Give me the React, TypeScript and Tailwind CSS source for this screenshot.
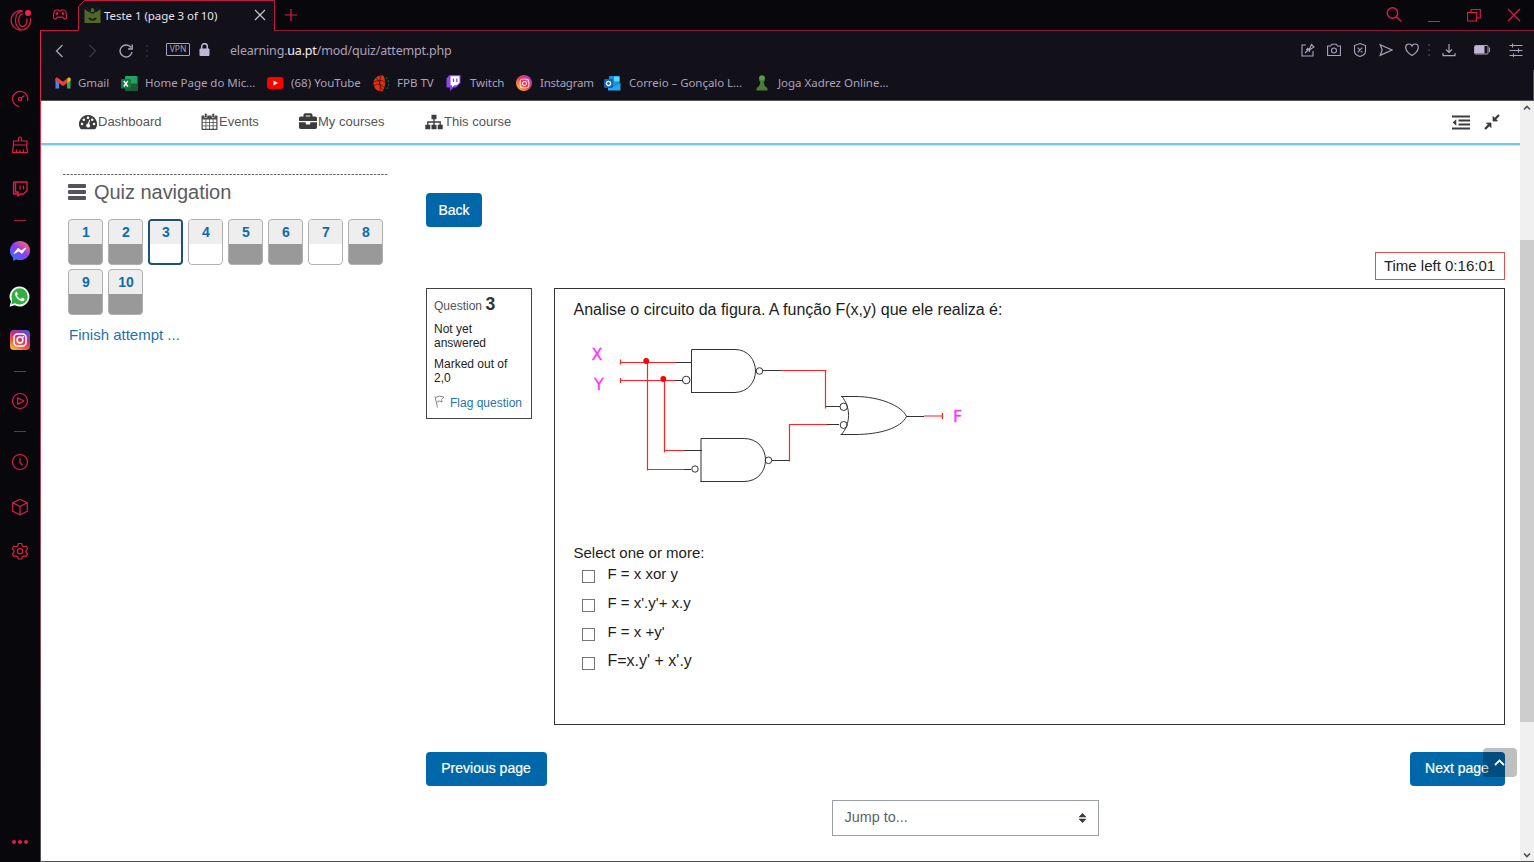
import type { ReactNode } from "react";
import { FaInstagram, FaBriefcase } from "react-icons/fa";

const ui = "font-['Noto_Sans',sans-serif]";

function Stroke({ size = 18, vb = 24, w = 1.4, children, className = "" }: { size?: number; vb?: number; w?: number; children: ReactNode; className?: string }) {
  return (
    <svg width={size} height={size} viewBox={`0 0 ${vb} ${vb}`} fill="none" stroke="currentColor" strokeWidth={w} className={`block shrink-0 ${className}`}>
      {children}
    </svg>
  );
}

function Slot({ mt, children }: { mt: string; children: ReactNode }) {
  return <div className={`flex h-5 w-10 shrink-0 items-center justify-center pr-px ${mt}`}>{children}</div>;
}

function Dash({ mt }: { mt: string }) {
  return <div className={`h-px w-3 shrink-0 bg-[#a8183a] ${mt}`} />;
}

function InstagramGlyph() {
  return (
    <>
      <rect x="4" y="4" width="12" height="12" rx="3.4" fill="none" stroke="#fff" strokeWidth="1.5" />
      <circle cx="10" cy="10" r="2.9" fill="none" stroke="#fff" strokeWidth="1.5" />
      <circle cx="13.4" cy="6.6" r="0.9" fill="#fff" />
    </>
  );
}

function Sidebar() {
  return (
    <aside className="flex h-full w-10 shrink-0 flex-col items-center bg-[#08070b] text-[#dd1e48]">
      <Slot mt="mt-[10px]">
        <svg width="22" height="22" viewBox="0 0 22 22" fill="none" stroke="currentColor" strokeWidth="1.2" className="ml-[3px] shrink-0">
          <path d="M12.500 1.800A9.700 9.700 0 1 0 20.300 9.200" />
          <path d="M12.500 1.800C8.500 2.500 5.500 6 5.500 11.300c0 4.700 2.500 8 5.500 9.200M12.800 4.800C10.500 5.200 8.800 8 8.800 11.500c0 3.500 1.700 6 4 6 2.700 0 4.400-3 4.200-8" />
          <circle cx="18" cy="3.900" r="3" fill="#fa1e4e" stroke="none" />
        </svg>
      </Slot>
      <Slot mt="mt-[59px]">
        <Stroke vb={18} w={1.2}>
          <path d="M8.300 16.500A7.600 7.600 0 1 1 16.500 10.800M10.200 8.200l3-2.400" />
          <circle cx="9" cy="9.300" r="1.700" />
        </Stroke>
      </Slot>
      <Slot mt="mt-[26px]">
        <Stroke vb={18} w={1.2}>
          <path d="M7.500 5V2.500a1.500 1.500 0 0 1 3 0V5H16v4H2.500V5zM2.500 9L1.500 16.500h15L15.500 9M5.500 13.500v3M9 14v2.500M12.500 13.500v3" />
        </Stroke>
      </Slot>
      <Slot mt="mt-[24px]">
        <Stroke size={16} vb={16} w={1.3}>
          <path d="M2 1h13v8.500l-3.500 3.500H8.500L6 15v-2H1.500V3z" />
          <path d="M3.500 2v9h2.500v2" strokeWidth="1.500" />
          <path d="M8 4.500v4M11.500 4.500v4" />
        </Stroke>
      </Slot>
      <Dash mt="mt-[21px]" />
      <Slot mt="mt-[20px]">
        <svg width="20" height="20" viewBox="0 0 20 20">
          <defs>
            <linearGradient id="msg" x1="0" y1="1" x2="0.8" y2="0">
              <stop offset="0" stopColor="#1488ff" />
              <stop offset="0.55" stopColor="#8a3cf5" />
              <stop offset="1" stopColor="#ff6a68" />
            </linearGradient>
          </defs>
          <path d="M10 0C4.300 0 0 4.200 0 9.700c0 2.900 1.200 5.300 3.200 7V20l3-1.500c1.200.4 2.400.6 3.800.6 5.700 0 10-4.200 10-9.500S15.700 0 10 0z" fill="url(#msg)" />
          <path d="M4 12.600L8 7.200l3.200 2.500L16 6.900l-4 5.600-3.200-2.500z" fill="#fff" stroke="#fff" strokeWidth="0.800" />
        </svg>
      </Slot>
      <Slot mt="mt-[25px]">
        <svg width="21" height="21" viewBox="0 0 21 21">
          <path d="M10.500 0.500A10 10 0 0 0 2 15.600L0.500 20.700l5.200-1.400A10 10 0 1 0 10.500 0.500z" fill="#f4f4f4" />
          <circle cx="10.600" cy="10.400" r="8.100" fill="#2fb041" />
          <path d="M3.400 13l-1 5.200 5-1.400z" fill="#2fb041" />
          <path d="M7.300 5.700c-1.500 1-1.600 2.600-.6 4.500 1.200 2.300 3 4 5.400 4.900 1.700.6 3-.1 3.400-1.600.1-.5 0-.7-.4-.9l-1.700-.8c-.3-.1-.6-.1-.8.200l-.8 1c-1.800-.8-3.100-2-3.900-3.600l.7-.9c.2-.2.200-.5.100-.7l-.7-1.700c-.2-.4-.400-.5-.7-.4z" fill="#fff" />
        </svg>
      </Slot>
      <Slot mt="mt-[24px]">
        <svg width="20" height="20" viewBox="0 0 20 20">
          <defs>
            <linearGradient id="ig" x1="0.100" y1="1" x2="0.700" y2="0">
              <stop offset="0" stopColor="#fdc74d" />
              <stop offset="0.350" stopColor="#f25a3c" />
              <stop offset="0.650" stopColor="#cc2a86" />
              <stop offset="1" stopColor="#5b4fcf" />
            </linearGradient>
          </defs>
          <rect width="20" height="20" rx="4" fill="url(#ig)" />
          <InstagramGlyph />
        </svg>
      </Slot>
      <Dash mt="mt-[21px]" />
      <Slot mt="mt-[19px]">
        <Stroke vb={18} w={1.200}>
          <circle cx="9" cy="9" r="7.500" />
          <path d="M6.700 5.800v6.400L13 9z" strokeLinejoin="round" />
        </Stroke>
      </Slot>
      <Dash mt="mt-[20px]" />
      <Slot mt="mt-[20px]">
        <Stroke vb={18} w={1.200}>
          <circle cx="9" cy="9" r="7.500" />
          <path d="M9 5v4.500l2.500 3" />
        </Stroke>
      </Slot>
      <Slot mt="mt-[25px]">
        <Stroke vb={18} w={1.200}>
          <path d="M9 1.300l7.300 3.500v8.400L9 16.700l-7.300-3.500V4.800zM1.700 4.800L9 8.500l7.300-3.700M9 8.500v8.200" strokeLinejoin="round" />
        </Stroke>
      </Slot>
      <Slot mt="mt-[24px]">
        <Stroke vb={18} w={1.200}>
          <path d="M7.300 1.500h3.400l.6 2.300 1.500.9 2.300-.7 1.500 2.800-1.600 1.600v1.800l1.600 1.600-1.500 2.700-2.300-.6-1.500.9-.6 2.200H7.300l-.6-2.200-1.500-.9-2.300.6-1.500-2.700L3 10.200V8.400L1.400 6.800 2.900 4l2.300.700 1.500-.9z" strokeLinejoin="round" />
          <circle cx="9" cy="9.200" r="2.600" />
        </Stroke>
      </Slot>
      <div className="mt-[279px] flex gap-[2px]">
        <i className="size-[4px] rounded-full bg-[#e01c48]" />
        <i className="size-[4px] rounded-full bg-[#e01c48]" />
        <i className="size-[4px] rounded-full bg-[#e01c48]" />
      </div>
    </aside>
  );
}

function TabBar() {
  return (
    <div className="flex h-[31px] shrink-0 bg-[#08070b] text-[#dd1e48]">
      <div className="flex w-[37px] items-center justify-center border-b border-[#c01c40]">
        <Stroke size={16} vb={16} w={1.200}>
          <path d="M4 3h2.500l1 1h1l1-1H12c1.500 0 2.500 3 2.500 6.500 0 2.500-1.200 3-2.300 2.500L10.500 10.200h-5L3.800 12C2.700 12.500 1.500 12 1.500 9.500 1.500 6 2.500 3 4 3z" />
          <circle cx="5" cy="6.700" r="0.800" />
          <circle cx="11" cy="6.700" r="0.800" />
        </Stroke>
      </div>
      <div className="relative flex w-[197px] items-center bg-[#121019]">
        <svg width="197" height="31" viewBox="0 0 197 31" fill="none" className="absolute inset-0">
          <path d="M0 0h7L0 7z" fill="#08070b" />
          <path d="M-1 30.500H0.500V6.500L6.500 0.500H196.500V30.500H198" stroke="#c01c40" />
        </svg>
        <svg width="17" height="17" viewBox="0 0 17 17" className="ml-[6px]">
          <path d="M0.500 2L4.500 5 8.500 0.500 12.500 5 16.500 2V16H0.500z" fill="#4f6728" />
          <path d="M1.500 0h3v4zM15.500 0h-3v4zM5 4.500l2-2.500v3h3V2l2 2.500-2 2H7zM4 11.200q2.500-1.500 4.500 1 2-2.500 4.500-1-2 2.500-4.500 2.500T4 11.200z" fill="#1b2110" />
        </svg>
        <span className={`${ui} ml-[3px] whitespace-nowrap text-[11.500px] tracking-[-0.050px] text-[#e6e3ec]`}>Teste 1 (page 3 of 10)</span>
        <Stroke size={12} vb={12} w={1.200} className="absolute top-[9px] left-[176px] text-[#c9c6d0]">
          <path d="M1 1l10 10M11 1L1 11" />
        </Stroke>
      </div>
      <div className="flex grow items-center border-b border-[#8c1a34]">
        <Stroke size={12} vb={12} w={1.200} className="ml-[10px]">
          <path d="M6 0v12M0 6h12" />
        </Stroke>
        <Stroke size={16} vb={16} w={1.400} className="mr-[26px] ml-auto">
          <circle cx="6.500" cy="6" r="5.200" />
          <path d="M10.300 9.800l5 4.800" />
        </Stroke>
        <div className="mt-3 mr-[27px] h-px w-3 bg-[#dd1e48]" />
        <Stroke size={14} vb={14} w={1.100} className="mr-[26px]">
          <path d="M0.600 4.500h9v8.500h-9zM4 4.500V1.500h9.300V10H9.600" />
        </Stroke>
        <Stroke size={14} vb={14} w={1.200} className="mr-[13px]">
          <path d="M1 1l12 12M13 1L1 13" />
        </Stroke>
      </div>
    </div>
  );
}

function AddressBar() {
  return (
    <div className="flex h-[39px] shrink-0 items-center text-[#aaa3bb]">
      <Stroke size={14} vb={14} w={1.300} className="ml-[12px]">
        <path d="M9.500 1L3.500 7l6 6" />
      </Stroke>
      <Stroke size={14} vb={14} w={1.300} className="ml-[18px] text-[#3d3947]">
        <path d="M4.500 1l6 6-6 6" />
      </Stroke>
      <Stroke size={14} vb={14} w={1.400} className="ml-[20px]">
        <path d="M12 3.500A6 6 0 1 0 13 8M13.200 0.500V5H9" />
      </Stroke>
      <div className="ml-[13px] flex flex-col gap-[3px]">
        <i className="size-[2px] bg-[#29252f]" />
        <i className="size-[2px] bg-[#29252f]" />
        <i className="size-[2px] bg-[#29252f]" />
      </div>
      <div className="mb-[2px] ml-[18px] flex h-[13px] w-6 items-center justify-center rounded-[1px] border border-[#aaa3bb] font-['Noto_Sans',sans-serif] text-[8.500px] leading-none">VPN</div>
      <svg width="11" height="14" viewBox="0 0 11 14" className="mb-[2px] ml-[9px]">
        <rect x="0.500" y="5.500" width="10" height="7.500" rx="1" fill="#c0b6d6" />
        <path d="M2.700 6V3.500a2.800 2.800 0 0 1 5.600 0V6" fill="none" stroke="#c0b6d6" strokeWidth="1.500" />
      </svg>
      <span className={`${ui} mt-[2px] ml-[20px] text-[12.500px] tracking-[-0.190px] whitespace-nowrap`}>
        elearning.<span className="text-[#f2f0f6]">ua.pt</span>/mod/quiz/attempt.php
      </span>
      <div className="mr-[11px] mb-[2px] ml-auto flex items-center">
        <Stroke size={14} vb={14} w={1.100}>
          <path d="M5 2H1v11h11V8M4 10L9 5M6 5l3 3M5 6.500L8.500 6l2-4.500L13 4l-4 2.500L8 9" />
        </Stroke>
        <Stroke size={14} vb={14} w={1.100} className="ml-[12px]">
          <path d="M0.600 3h3l1.200-1.800h4.400L10.400 3h3v9.500H0.600z" />
          <circle cx="7" cy="7.500" r="2.500" />
        </Stroke>
        <Stroke size={14} vb={14} w={1.100} className="ml-[12px]">
          <path d="M7 0.600l5.500 2v5.900c0 2.500-3 4.200-5.500 5-2.500-.8-5.500-2.500-5.500-5V2.600zM4.700 4.700l4.600 4.600M9.300 4.700L4.700 9.300" />
        </Stroke>
        <Stroke size={14} vb={14} w={1.200} className="ml-[12px]">
          <path d="M1.200 1.700L13 7 1.200 12.300 3.200 7z" />
        </Stroke>
        <Stroke size={14} vb={14} w={1.200} className="ml-[12px]">
          <path d="M7 12.600C3 10 0.700 7.500 0.700 4.500 0.700 2.500 2 1 4 1c1.500 0 2.500.8 3 2 .5-1.200 1.500-2 3-2 2 0 3.300 1.500 3.300 3.500 0 3-2.300 5.500-6.300 8.100z" />
        </Stroke>
        <div className="ml-[9px] flex flex-col gap-[3px]">
          <i className="size-[2px] bg-[#37323f]" />
          <i className="size-[2px] bg-[#37323f]" />
          <i className="size-[2px] bg-[#37323f]" />
        </div>
        <Stroke size={14} vb={14} w={1.200} className="ml-[12px]">
          <path d="M7 1v8M4 6.500l3 3 3-3M1 10v2.700h12V10" />
        </Stroke>
        <svg width="17" height="10" viewBox="0 0 17 10" className="ml-[18px]">
          <rect x="0.500" y="0.500" width="13.500" height="8.500" rx="1" fill="none" stroke="#aaa3bb" />
          <rect x="1" y="1" width="9.500" height="7.500" fill="#c0b6d6" />
          <path d="M15.500 2.500v4.500" stroke="#aaa3bb" />
        </svg>
        <Stroke size={14} vb={14} w={1.100} className="ml-[18px]">
          <path d="M0.500 2.500h13M0.500 7.500h13M0.500 12.500h13M3.500 0.500v4M9.500 5.500v4M4.500 10.500v3.500" />
        </Stroke>
      </div>
    </div>
  );
}

const bookmarks: { label: string; width: string; gap: string; track: string; icon: ReactNode }[] = [
  {
    label: "Gmail", width: "w-[66px]", gap: "w-[23px]", track: "tracking-[-0.1px]",
    icon: (
      <svg width="16" height="12" viewBox="0 0 16 12">
        <path d="M0.500 11.500V1.500L4 4v7.500z" fill="#4285f4" />
        <path d="M15.500 11.500V1.500L12 4v7.500z" fill="#34a853" />
        <path d="M12 1.800l1.500-1.200c1-.6 2 .1 2 1.200v2L12 6z" fill="#fbbc04" />
        <path d="M0.500 3.800v-2C0.500.7 1.600 0 2.500.700L8 4.800 12.500 1.300V5.800L8 9z" fill="#ea4335" />
      </svg>
    ),
  },
  {
    label: "Home Page do Mic...", width: "w-[146px]", gap: "w-[24px]", track: "tracking-[-0.03px]",
    icon: (
      <svg width="17" height="15" viewBox="0 0 17 15">
        <rect x="4" width="12.500" height="15" rx="1" fill="#21a366" />
        <path d="M4 4h6v7H4z" fill="#107c41" /><path d="M10 7.500h6.500V15H4v-4h6z" fill="#185c37" />
        <rect y="3" width="9.500" height="9.500" rx="1" fill="#107c41" />
        <path d="M2.800 5l4 5.500M6.800 5l-4 5.500" stroke="#fff" strokeWidth="1.400" />
      </svg>
    ),
  },
  {
    label: "(68) YouTube", width: "w-[106px]", gap: "w-[24px]", track: "tracking-[0.03px]",
    icon: (
      <svg width="17" height="12" viewBox="0 0 17 12">
        <rect width="16.500" height="12" rx="3" fill="#f00" /><path d="M6.500 3.400v5.200L11 6z" fill="#fff" />
      </svg>
    ),
  },
  {
    label: "FPB TV", width: "w-[73px]", gap: "w-[24px]", track: "tracking-[0px]",
    icon: (
      <svg width="17" height="17" viewBox="0 0 17 17">
        <path d="M10.500 0.800C5 -0.500 0.500 3.500 0.500 8.500c0 4.500 4 8.500 9 7.700 3-4.500 3.500-10.500 1-15.400z" fill="#e03016" />
        <path d="M1 7c4-2 8-2 11 0M3 3c4 3 5 8 4 13M8 1C6 6 6 11 10 15M1 11c3-3 7-2 10 1" fill="none" stroke="#4a1108" strokeWidth="0.800" />
        <path d="M13 2.500a8 8 0 0 1 0 12" fill="none" stroke="#0c6a50" strokeDasharray="2 1.500" strokeWidth="1.200" />
      </svg>
    ),
  },
  {
    label: "Twitch", width: "w-[70px]", gap: "w-[24px]", track: "tracking-[-0.1px]",
    icon: (
      <svg width="15" height="16" viewBox="0 0 15 16">
        <path d="M3.500 0L0.500 3.500v9H4V16l3.500-3.500H10L14.500 8V0z" fill="#8b44f7" />
        <path d="M4.500 1.200h9v6.300l-2.700 2.700H8.200L6 12.300v-2.100H4.500z" fill="#fff" />
        <path d="M7.500 3.500v3.500M10.800 3.500v3.500" stroke="#8b44f7" strokeWidth="1.300" />
      </svg>
    ),
  },
  {
    label: "Instagram", width: "w-[88px]", gap: "w-[24px]", track: "tracking-[-0.25px]",
    icon: (
      <span className="flex size-4 items-center justify-center rounded-full bg-linear-to-tr from-[#ffc83d] via-[#f4304a] to-[#9b12e0] text-white">
        <FaInstagram size={11} />
      </span>
    ),
  },
  {
    label: "Correio – Gonçalo L...", width: "w-[150px]", gap: "w-[25px]", track: "tracking-[-0.05px]",
    icon: (
      <svg width="17" height="15" viewBox="0 0 17 15">
        <rect x="5" width="10.500" height="13" rx="1" fill="#1490df" />
        <path d="M10 0.500h5.500v5H10z" fill="#50d9ff" />
        <path d="M4 8l6 3 6.500-4v7.500H4z" fill="#28a8ea" />
        <rect y="3" width="9" height="9" rx="1" fill="#0a64ba" />
        <circle cx="4.500" cy="7.500" r="2.100" fill="none" stroke="#fff" strokeWidth="1.300" />
      </svg>
    ),
  },
  {
    label: "Joga Xadrez Online...", width: "w-[140px]", gap: "w-[24px]", track: "tracking-[-0.02px]",
    icon: (
      <svg width="17" height="16" viewBox="0 0 17 16">
        <circle cx="8" cy="3.200" r="2.900" fill="#5d9948" />
        <path d="M4.800 5.300h6.400L9.700 6.900c.2 2.700 1.100 4.200 2.800 5.300 1 .7 1.200 2 1 3.300H2.500c-.200-1.300 0-2.600 1-3.300 1.700-1.100 2.600-2.600 2.800-5.300z" fill="#4a7d3a" />
      </svg>
    ),
  },
];

function Bookmarks() {
  return (
    <div className="flex h-[30px] shrink-0 items-center pb-[4px] pl-[14px] text-[#aaa3bb]">
      {bookmarks.map((b) => (
        <div key={b.label} className={`flex shrink-0 items-center ${b.width}`}>
          <span className={`shrink-0 ${b.gap}`}>{b.icon}</span>
          <span className={`${ui} text-[11.500px] whitespace-nowrap ${b.track}`}>{b.label}</span>
        </div>
      ))}
    </div>
  );
}

function GaugeIcon() {
  return (
    <svg width="18" height="18" viewBox="0 0 18 18" fill="#3c3c3c">
      <path d="M9 2a9 9 0 0 0-7.600 13.800c.2.300.5.400.8.400h13.600c.300 0 .6-.1.800-.4A9 9 0 0 0 9 2z" />
      <g fill="#fff">
        <circle cx="3" cy="11" r="1.250" /><circle cx="4.800" cy="6.700" r="1.250" /><circle cx="9" cy="4.800" r="1.250" />
        <circle cx="13.200" cy="6.700" r="1.250" /><circle cx="15" cy="11" r="1.250" />
        <path d="M10.200 6.800l.9.300-.9 3.800a2 2 0 1 1-1.200-.3z" />
      </g>
    </svg>
  );
}

function CalendarIcon() {
  return (
    <svg width="17" height="18" viewBox="0 0 17 18" fill="#4a4a4a">
      <path d="M1.500 2.500h14c.6 0 1 .4 1 1v12.500c0 .6-.4 1-1 1h-14c-.6 0-1-.4-1-1V3.500c0-.6.400-1 1-1z" />
      <g fill="#fff">
        <path d="M1.700 6.500h2.800v2.500H1.700zM5.300 6.500h2.800v2.500H5.300zM8.900 6.500h2.800v2.500H8.900zM12.500 6.500h2.800v2.500h-2.800zM1.700 9.800h2.800v2.600H1.700zM5.300 9.800h2.800v2.600H5.300zM8.900 9.800h2.800v2.600H8.900zM12.500 9.800h2.800v2.600h-2.800zM1.700 13.200h2.800v2.600H1.700zM5.300 13.200h2.800v2.600H5.300zM8.900 13.200h2.800v2.600H8.900zM12.500 13.200h2.800v2.600h-2.800z" />
      </g>
      <rect x="3.500" y="0.300" width="2.600" height="4.500" rx="1.200" stroke="#fff" strokeWidth="0.600" />
      <rect x="10.900" y="0.300" width="2.600" height="4.500" rx="1.200" stroke="#fff" strokeWidth="0.600" />
    </svg>
  );
}

function TreeIcon() {
  return (
    <svg width="18" height="16" viewBox="0 0 18 16" fill="#3c3c3c">
      <path d="M6.500 0.800h5v4.500h-5zM0.300 10.700h5v4.500h-5zM6.500 10.700h5v4.500h-5zM12.700 10.700h5v4.500h-5z" />
      <path d="M9 5v6M2.800 11V8h12.400v3" fill="none" stroke="#3c3c3c" strokeWidth="1.300" />
    </svg>
  );
}

function OutdentIcon() {
  return (
    <svg width="18" height="15" viewBox="0 0 18 15" fill="#3c3c3c" className="mr-[14px] ml-auto">
      <path d="M0 0.500h18v2H0zM6.500 4.500H18v2H6.500zM6.500 8.500H18v2H6.500zM0 12.500h18v2H0zM4.300 4.200v6.600L0.700 7.500z" />
    </svg>
  );
}

function CourseNav() {
  return (
    <nav className="flex h-[42px] shrink-0 items-center pl-[38px] text-[13px] text-[#555]">
      <div className="flex w-[122px] items-center gap-px"><GaugeIcon />Dashboard</div>
      <div className="flex w-[98px] items-center gap-px"><CalendarIcon />Events</div>
      <div className="flex w-[126px] items-center gap-px"><FaBriefcase size={18} className="mb-[3px] text-[#3c3c3c]" />My courses</div>
      <div className="flex items-center gap-px"><TreeIcon />This course</div>
      <OutdentIcon />
      <svg width="16" height="16" viewBox="0 0 16 16" className="mr-[20px]" fill="#3c3c3c" stroke="#3c3c3c">
        <path d="M9 2.500V7h4.500zM7 13.500V9H2.500z" strokeWidth="0.800" />
        <path d="M10.500 5.500L15 1M5.500 10.500L1 15" strokeWidth="2.300" />
      </svg>
    </nav>
  );
}

const questions = [
  { n: 1, answered: true }, { n: 2, answered: true }, { n: 3, answered: false, current: true }, { n: 4, answered: false },
  { n: 5, answered: true }, { n: 6, answered: true }, { n: 7, answered: false }, { n: 8, answered: true },
  { n: 9, answered: true }, { n: 10, answered: true },
];

function QuizNavigation() {
  return (
    <section className="ml-[22px] w-[325px] shrink-0 pt-[28px]">
      <svg width="325" height="1" className="block">
        <path d="M0 0.500H325" stroke="#666" strokeDasharray="2.500 1.200" />
      </svg>
      <h2 className="flex h-[34px] items-center gap-2 pl-[5px] text-[20px] tracking-[-0.040px] text-[#5b5b60]">
        <span className="flex w-[18px] flex-col gap-[2px]">
          <i className="h-[4px] rounded-[1px] bg-[#55545a]" />
          <i className="h-[4px] rounded-[1px] bg-[#55545a]" />
          <i className="h-[4px] rounded-[1px] bg-[#55545a]" />
        </span>
        Quiz navigation
      </h2>
      <div className="mt-[10px] ml-[5px] grid grid-cols-[repeat(8,35px)] gap-x-[5px] gap-y-[4px]">
        {questions.map((q) => (
          <a
            key={q.n}
            className={`flex h-[46px] flex-col overflow-hidden rounded-[4px] pl-px text-center text-[14px] font-bold text-[#0f6cab] ${q.current ? "border-2 border-[#1d5272]" : "border border-[#b0b0b0]"} ${q.answered ? "bg-[#999]" : "bg-white"}`}
          >
            <span className={`-ml-px bg-[#eee] pl-px ${q.current ? "h-[23px] leading-[23px]" : "h-[24px] leading-[25px]"}`}>{q.n}</span>
          </a>
        ))}
      </div>
      <a className="mt-[9px] ml-[6px] block text-[15px] leading-[22px] text-[#1f72ad]">Finish attempt ...</a>
    </section>
  );
}

function Circuit() {
  return (
    <svg width="400" height="170" viewBox="574 330 400 170" fill="none" strokeWidth="1" className="block">
      <g stroke="#f22">
        <path strokeWidth="1.200" d="M620.500 359.500v5M620.500 362.500H677M620.500 378v5M620.500 380.500H675M647.500 362V470.500M647 469.500H685M664.500 380V452.500M664 450.500H685M781 370.500H826.500M825.500 370V408.500M789.500 461.500V424.500H828M924 416H943M942.500 413v6" />
      </g>
      <g stroke="#333">
        <path d="M676 362.500H691M675 380.500H682M684 469.500H691M684 450.500H702M763 370.500H781M826 406.500H840M772 460.500H789M827 424.500H839M906 416.500H924" />
        <path d="M691.500 392.500V349.500H735C748 349.500 755.500 360 755.500 371S748 392 735 392.500H691" />
        <path d="M701 482V438.500H744C758 438.500 765.500 449 765.500 460S758 481.500 744 481.500H700.500" />
        <path d="M841 396.500H855C880 396.500 902 406 906.500 416.500 901 428 880 434.500 855 434.500H840.500M841.500 396C851 407 851 424 841 435" />
        <circle cx="686.200" cy="380" r="3.800" /><circle cx="695" cy="469" r="3.200" />
        <circle cx="759.500" cy="371" r="3.300" /><circle cx="768.500" cy="460.300" r="3.300" />
        <circle cx="843.700" cy="406.800" r="3.700" /><circle cx="843.700" cy="425" r="3.500" />
      </g>
      <g fill="#f00">
        <circle cx="646.200" cy="361" r="2.900" /><circle cx="663.300" cy="379" r="2.900" />
      </g>
      <g fill="#ff33ff" stroke="#ff33ff" strokeWidth="0.300" className="font-['DejaVu_Sans',sans-serif] text-[16px]">
        <text x="591.500" y="360">X</text><text x="594" y="390">Y</text><text x="953" y="422">F</text>
      </g>
    </svg>
  );
}

function QuestionInfo() {
  return (
    <div className="mr-[22px] h-[131px] w-[106px] shrink-0 border border-[#444] pl-[7.500px] text-[12px] leading-[13.500px] text-[#222]">
      <h3 className="mt-[5px] h-[22px] leading-[20px] whitespace-nowrap text-[#555]">
        Question <b className="text-[17.500px] text-[#333]">3</b>
      </h3>
      <div className="mt-[7px]">Not yet<br />answered</div>
      <div className="mt-[8px]">Marked out of<br />2,0</div>
      <a className="mt-[12px] flex items-center whitespace-nowrap text-[#1f72ad]">
        <svg width="11" height="13" viewBox="0 0 11 13" fill="none" stroke="#888" className="mr-[5px] -mt-[4px]">
          <path d="M1 1.500l2.500 11M1.500 2.500Q5 0 10 2L7.500 4.500 8 7Q5 5 3 7" />
        </svg>
        Flag question
      </a>
    </div>
  );
}

const options = [
  { text: "F = x xor y", size: "text-[15px]" },
  { text: "F = x'.y'+ x.y", size: "text-[15px]" },
  { text: "F = x +y'", size: "text-[15px]" },
  { text: "F=x.y' + x'.y", size: "text-[16px]" },
];

function QuestionBody() {
  return (
    <div className="h-[437px] w-[951px] shrink-0 border border-[#333] pl-[19px] text-[15px] text-[#1d1d1d]">
      <p className="mt-[10px] text-[16px] leading-[22px] tracking-[-0.010px] whitespace-nowrap">Analise o circuito da figura. A função F(x,y) que ele realiza é:</p>
      <div className="mt-[9px]"><Circuit /></div>
      <p className="mt-[42px] leading-[22px]">Select one or more:</p>
      <div className="-mt-px flex flex-col">
        {options.map((o) => (
          <label key={o.text} className="flex h-[29px] items-start pl-[8px]">
            <span className="mt-[7px] size-[13px] shrink-0 border border-[#767676] bg-white" />
            <span className={`ml-[13px] leading-[21px] ${o.size}`}>{o.text}</span>
          </label>
        ))}
      </div>
    </div>
  );
}

function PrimaryButton({ children, width }: { children: ReactNode; width: string }) {
  return (
    <button className={`flex h-[34px] items-center justify-center rounded-[4px] bg-[#0067a8] text-[14px] text-white [-webkit-text-stroke:0.2px_white] ${width}`}>{children}</button>
  );
}

function QuizContent() {
  return (
    <section className="ml-[37.500px] flex w-[1079px] shrink-0 flex-col pt-[47px]">
      <PrimaryButton width="w-[56px] ml-[0.500px]">Back</PrimaryButton>
      <div className="mt-[25px] flex h-[28px] w-[130px] items-center justify-center self-end border border-[#d9534f] text-[15px] whitespace-nowrap text-[#222]">
        Time left 0:16:01
      </div>
      <div className="mt-[8px] flex items-start">
        <QuestionInfo />
        <QuestionBody />
      </div>
      <div className="mt-[26.500px] flex justify-between">
        <PrimaryButton width="w-[121px]">Previous page</PrimaryButton>
        <div className="relative">
          <PrimaryButton width="w-[95px]">Next page</PrimaryButton>
          <div className="absolute -top-[4px] left-[73px] flex h-[29px] w-[34px] items-center justify-center rounded-[4px] bg-black/25 text-white">
            <Stroke size={11} vb={11} w={1.800}>
              <path d="M1 8l4.500-4.500L10 8" />
            </Stroke>
          </div>
        </div>
      </div>
      <div className="mt-[14.500px] flex h-[36px] w-[267px] items-center justify-between self-center border border-[#9a9fa5] pr-[11px] pl-[12px] text-[14.400px] text-[#5a6268]">
        <span className="mb-px">Jump to...</span>
        <svg width="9" height="10" viewBox="0 0 9 10" fill="#343a40"><path d="M0.500 4.200L4.500 0l4 4.200zM0.500 5.800L4.500 10l4-4.200z" /></svg>
      </div>
    </section>
  );
}

function Scrollbar() {
  return (
    <div className="flex w-[14px] shrink-0 flex-col items-center bg-[#f0f0f0] text-[#505050]">
      <Stroke size={8} vb={8} w={1.600} className="mt-[3px]"><path d="M1 5.500l3-3 3 3" /></Stroke>
      <div className="mt-[128px] h-[482px] w-full bg-[#cdcdcd]" />
      <Stroke size={8} vb={8} w={1.600} className="mt-auto mb-[2px]"><path d="M1 2.500l3 3 3-3" /></Stroke>
    </div>
  );
}

export default function App() {
  return (
    <div className="flex h-[862px] w-[1534px] overflow-hidden bg-white font-['Liberation_Sans',Arial,sans-serif]">
      <Sidebar />
      <div className="flex w-px shrink-0 flex-col bg-[#08070b] pt-[30px]">
        <div className="grow bg-linear-to-b from-[#e0204a] via-[#b04560] to-[#505050]" />
      </div>
      <div className="flex min-w-0 grow flex-col">
        <div className="flex flex-col bg-[#121019]">
          <TabBar />
          <AddressBar />
          <div className="border-r border-[#555]">
            <Bookmarks />
          </div>
          <div className="h-px bg-[#555]" />
        </div>
        <div className="flex min-h-0 grow border-b border-[#505050]">
          <div className="flex min-w-0 grow flex-col">
            <CourseNav />
            <div className="h-[3px] shrink-0 border-b border-[#c8e8fc] bg-[#74c8fa]" />
            <main className="flex items-start">
              <QuizNavigation />
              <QuizContent />
            </main>
          </div>
          <Scrollbar />
        </div>
      </div>
    </div>
  );
}
